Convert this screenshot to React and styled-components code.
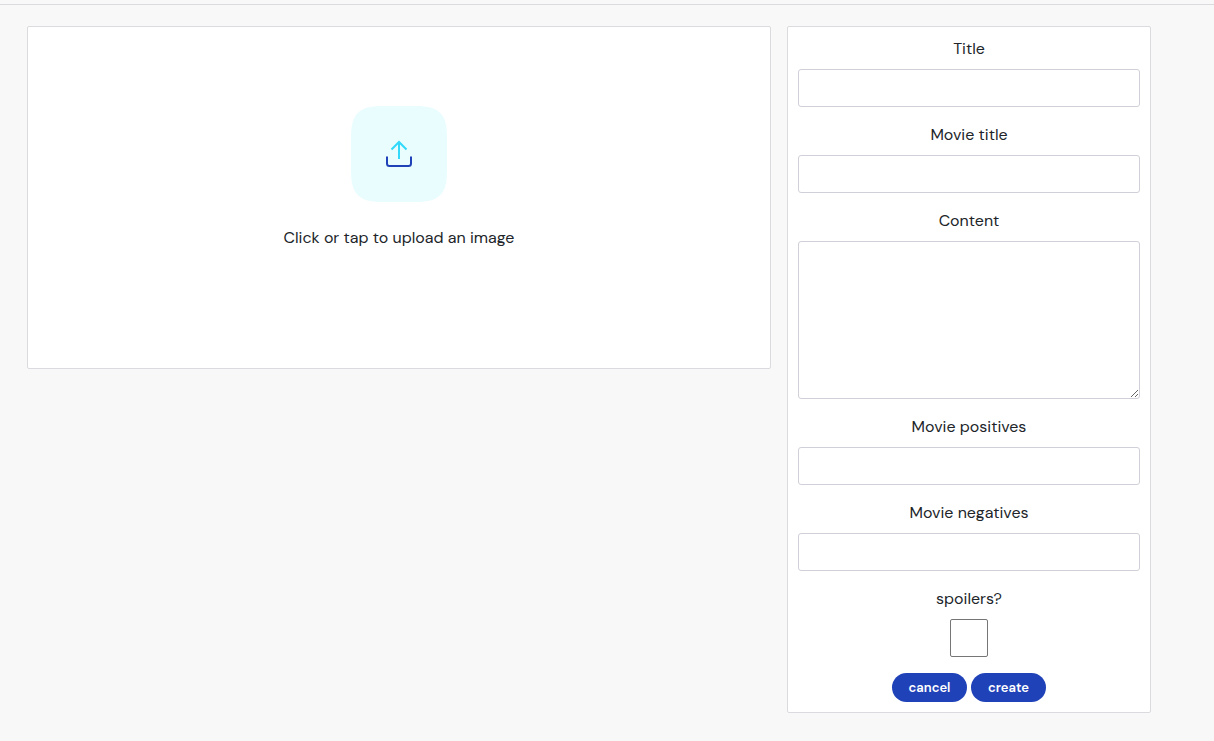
import React from "react";
import styled, { createGlobalStyle, css } from "styled-components";

const GlobalStyle = createGlobalStyle`
  *, *::before, *::after { box-sizing: border-box; }
  body {
    margin: 0;
    background: #f8f8f8;
    color: #212529;
    font-family: "DM Sans", Inter, "Liberation Sans", sans-serif;
    font-size: 16px;
    font-weight: 400;
    line-height: 24px;
  }
`;

const Header = styled.header`
  height: 5px;
  border-bottom: 1px solid #dadadf;
`;

const Main = styled.main`
  padding: 21px 36px 28px 0;
`;

const Columns = styled.form`
  display: grid;
  grid-template-columns: minmax(0, 2fr) minmax(0, 1fr);
  align-items: start;
  max-width: 1140px;
  margin: 0 auto;
`;

const Column = styled.div`
  padding: 0 8px;
`;

const panel = css`
  background: #fff;
  border: 1px solid #dadadf;
  border-radius: 2px;
`;

const UploadButton = styled.button`
  ${panel}
  display: flex;
  flex-direction: column;
  align-items: center;
  gap: 24px;
  width: 100%;
  padding: 79px 16px 118px;
  color: inherit;
  font: inherit;
  cursor: pointer;
`;

const UploadIcon = styled.svg`
  display: block;
  width: 96px;
  height: 96px;
  fill: none;
  stroke-width: 2;
`;

const FieldsPanel = styled.div`
  ${panel}
  padding: 10px;
`;

const Field = styled.div`
  display: flex;
  flex-direction: column;
  align-items: center;
  gap: 8px;
  margin-bottom: 16px;
`;

const Label = styled.label`
  color: #212529;
`;

const TextInput = styled.input`
  display: block;
  width: 100%;
  height: 38px;
  padding: 6px 12px;
  background: #fff;
  border: 1px solid #d0d0d9;
  border-radius: 3px;
  color: #495057;
  font: inherit;
`;

const TextArea = styled(TextInput)`
  height: 158px;
  resize: vertical;
`;

const Checkbox = styled.input`
  appearance: none;
  width: 38px;
  height: 38px;
  margin: 0;
  background: #fff;
  border: 1px solid #767676;
  border-radius: 2px;

  &:checked {
    background: #2042b8;
  }
`;

const Actions = styled.div`
  display: flex;
  justify-content: center;
  gap: 4px;
`;

const ActionButton = styled.button`
  width: 75px;
  height: 29px;
  padding: 0;
  background: #2042b8;
  border: 0;
  border-radius: 15px;
  color: #fff;
  font-family: inherit;
  font-size: 13px;
  font-weight: 600;
  line-height: 20px;
  cursor: pointer;
`;

function TextField({ id, label, multiline }) {
  return (
    <Field>
      <Label htmlFor={id}>{label}</Label>
      {multiline ? (
        <TextArea as="textarea" id={id} name={id} />
      ) : (
        <TextInput type="text" id={id} name={id} />
      )}
    </Field>
  );
}

export default function App() {
  return (
    <>
      <GlobalStyle />
      <Header />
      <Main>
        <Columns onSubmit={(event) => event.preventDefault()}>
          <Column>
            <UploadButton type="button">
              <UploadIcon viewBox="0 0 96 96" aria-hidden="true">
                <path
                  d="M0 31C0 8 8 0 31 0H65C88 0 96 8 96 31V65C96 88 88 96 65 96H31C8 96 0 88 0 65Z"
                  fill="#e9fdff"
                />
                <path d="M48 53V36M40.500 43.500L48 36L55.500 43.500" stroke="#32d9fa" />
                <path d="M36 50.500V57.500Q36 60 38.500 60H57.500Q60 60 60 57.500V50.500" stroke="#2042b8" />
              </UploadIcon>
              <span>Click or tap to upload an image</span>
            </UploadButton>
          </Column>
          <Column>
            <FieldsPanel>
              <TextField id="title" label="Title" />
              <TextField id="movieTitle" label="Movie title" />
              <TextField id="content" label="Content" multiline />
              <TextField id="positives" label="Movie positives" />
              <TextField id="negatives" label="Movie negatives" />
              <Field>
                <Label htmlFor="spoilers">spoilers?</Label>
                <Checkbox type="checkbox" id="spoilers" name="spoilers" />
              </Field>
              <Actions>
                <ActionButton type="button">cancel</ActionButton>
                <ActionButton type="submit">create</ActionButton>
              </Actions>
            </FieldsPanel>
          </Column>
        </Columns>
      </Main>
    </>
  );
}
